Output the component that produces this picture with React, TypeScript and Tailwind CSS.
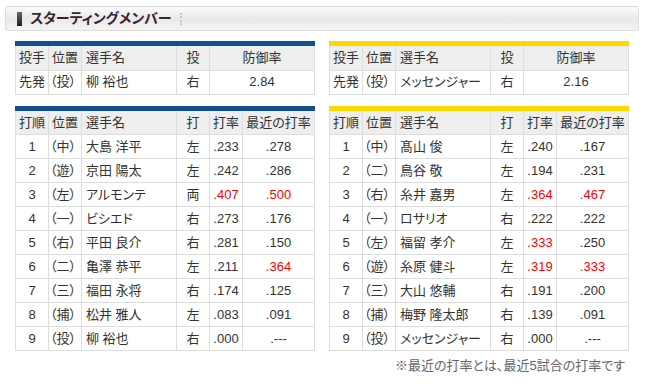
const font = { fontFamily: '"Liberation Sans", "Noto Sans CJK JP", sans-serif' }

type Batter = { no: number; pos: string; name: string; hand: string; avg: string; recent: string; avgHot?: boolean; recentHot?: boolean; visited?: boolean }

const dragons: Batter[] = [
    { no: 1, pos: "中", name: "大島 洋平", hand: "左", avg: ".233", recent: ".278" },
    { no: 2, pos: "遊", name: "京田 陽太", hand: "左", avg: ".242", recent: ".286" },
    { no: 3, pos: "左", name: "アルモンテ", hand: "両", avg: ".407", recent: ".500", avgHot: true, recentHot: true },
    { no: 4, pos: "一", name: "ビシエド", hand: "右", avg: ".273", recent: ".176" },
    { no: 5, pos: "右", name: "平田 良介", hand: "右", avg: ".281", recent: ".150" },
    { no: 6, pos: "二", name: "亀澤 恭平", hand: "左", avg: ".211", recent: ".364", recentHot: true },
    { no: 7, pos: "三", name: "福田 永将", hand: "右", avg: ".174", recent: ".125" },
    { no: 8, pos: "捕", name: "松井 雅人", hand: "左", avg: ".083", recent: ".091" },
    { no: 9, pos: "投", name: "柳 裕也", hand: "右", avg: ".000", recent: ".---" },
]

const tigers: Batter[] = [
    { no: 1, pos: "中", name: "髙山 俊", hand: "左", avg: ".240", recent: ".167" },
    { no: 2, pos: "二", name: "鳥谷 敬", hand: "左", avg: ".194", recent: ".231" },
    { no: 3, pos: "右", name: "糸井 嘉男", hand: "左", avg: ".364", recent: ".467", avgHot: true, recentHot: true },
    { no: 4, pos: "一", name: "ロサリオ", hand: "右", avg: ".222", recent: ".222" },
    { no: 5, pos: "左", name: "福留 孝介", hand: "左", avg: ".333", recent: ".250", avgHot: true },
    { no: 6, pos: "遊", name: "糸原 健斗", hand: "左", avg: ".319", recent: ".333", avgHot: true, recentHot: true },
    { no: 7, pos: "三", name: "大山 悠輔", hand: "右", avg: ".191", recent: ".200" },
    { no: 8, pos: "捕", name: "梅野 隆太郎", hand: "右", avg: ".139", recent: ".091" },
    { no: 9, pos: "投", name: "メッセンジャー", hand: "右", avg: ".000", recent: ".---", visited: true },
]

const th = "h-[24px] border border-[#dddddd] bg-[#eeeeee] text-[13px] font-normal text-[#333333] px-[3px] align-middle whitespace-nowrap"
const td = "h-[24px] border border-[#dddddd] bg-white text-[13px] text-[#333333] px-[3px] align-middle whitespace-nowrap"

const PitcherTable = ({ bar, name, era, visited }: { bar: string; name: string; era: string; visited?: boolean }) => {
    return (
        <div className="w-[300px]">
            <div className={`h-[5px] ${bar}`}></div>
            <table className="w-[300px] table-fixed border-collapse">
                <colgroup>
                    <col className="w-[33px]" />
                    <col className="w-[33px]" />
                    <col className="w-[95px]" />
                    <col className="w-[33px]" />
                    <col />
                </colgroup>
                <thead>
                    <tr>
                        <th className={`${th} text-left border-t-0`}>投手</th>
                        <th className={`${th} text-left border-t-0`}>位置</th>
                        <th className={`${th} text-left pl-[4px] border-t-0`}>選手名</th>
                        <th className={`${th} text-center border-t-0`}>投</th>
                        <th className={`${th} text-center border-t-0`}>防御率</th>
                    </tr>
                </thead>
                <tbody>
                    <tr>
                        <td className={`${td} text-left`}>先発</td>
                        <td className={`${td} text-left px-0 pl-[1px]`}>（投）</td>
                        <td className={`${td} text-left pl-[4px] ${visited ? "text-[#5b2194]" : "text-[#0b62a8]"}`}>{name}</td>
                        <td className={`${td} text-center`}>右</td>
                        <td className={`${td} text-center text-[12px]`}>{era}</td>
                    </tr>
                </tbody>
            </table>
        </div>
    )
}

const BattingTable = ({ bar, data }: { bar: string; data: Batter[] }) => {
    return (
        <div className="w-[300px]">
            <div className={`h-[5px] ${bar}`}></div>
            <table className="w-[300px] table-fixed border-collapse">
                <colgroup>
                    <col className="w-[33px]" />
                    <col className="w-[33px]" />
                    <col className="w-[95px]" />
                    <col className="w-[33px]" />
                    <col className="w-[33px]" />
                    <col />
                </colgroup>
                <thead>
                    <tr>
                        <th className={`${th} text-left border-t-0`}>打順</th>
                        <th className={`${th} text-left border-t-0`}>位置</th>
                        <th className={`${th} text-left pl-[4px] border-t-0`}>選手名</th>
                        <th className={`${th} text-center border-t-0`}>打</th>
                        <th className={`${th} text-center px-0 border-t-0`}>打率</th>
                        <th className={`${th} text-center px-0 border-t-0`}>最近の打率</th>
                    </tr>
                </thead>
                <tbody>
                    {
                        data.map((obj) => {
                            return (
                                <tr key={obj.no}>
                                    <td className={`${td} text-center text-[12px]`}>{obj.no}</td>
                                    <td className={`${td} text-left px-0 pl-[1px]`}>（{obj.pos}）</td>
                                    <td className={`${td} text-left pl-[4px] ${obj.visited ? "text-[#5b2194]" : "text-[#0b62a8]"}`}>{obj.name}</td>
                                    <td className={`${td} text-center`}>{obj.hand}</td>
                                    <td className={`${td} text-center px-0 text-[12px] ${obj.avgHot ? "text-[#ff0000]" : ""}`}>{obj.avg}</td>
                                    <td className={`${td} text-center text-[12px] ${obj.recentHot ? "text-[#ff0000]" : ""}`}>{obj.recent}</td>
                                </tr>
                            )
                        })
                    }
                </tbody>
            </table>
        </div>
    )
}

const App = () => {
    return (
        <div className="w-[647px] h-[392px] bg-white overflow-hidden pt-[6px] [font-feature-settings:'palt']" style={font}>
            <div className="ml-[5px] w-[634px] h-[25px] flex items-center border border-[#dddddd] rounded-[2px] bg-gradient-to-b from-[#fbfbfb] via-[#e9e9e9] to-[#f3f3f3] pl-[11px]">
                <div className="w-[5px] h-[14px] bg-gradient-to-b from-[#666666] to-[#1f1f1f]"></div>
                <h1 className="ml-[8px] text-[14px] font-bold text-[#3a2230]">スターティングメンバー</h1>
                <div className="ml-[8px] h-[12px] border-l-2 border-dotted border-[#c4c4c4]"></div>
            </div>
            <div className="flex gap-[14px] pl-[15px] mt-[10px]">
                <PitcherTable bar="bg-[#134f8c]" name="柳 裕也" era="2.84" />
                <PitcherTable bar="bg-[#ffd800]" name="メッセンジャー" era="2.16" visited />
            </div>
            <div className="flex gap-[14px] pl-[15px] mt-[11px]">
                <BattingTable bar="bg-[#134f8c]" data={dragons} />
                <BattingTable bar="bg-[#ffd800]" data={tigers} />
            </div>
            <p className="w-[625px] text-right text-[13px] text-[#666666] mt-[5px]">※最近の打率とは、最近5試合の打率です</p>
        </div>
    )
}

export default App
